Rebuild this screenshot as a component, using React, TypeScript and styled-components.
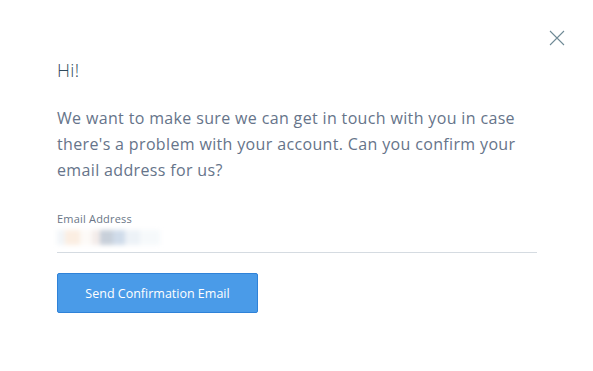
import React from "react";
import styled, { createGlobalStyle } from "styled-components";

const Global = createGlobalStyle`
  html, body { margin: 0; padding: 0; background: #fff; }
  body { font-family: "Open Sans", "Liberation Sans", sans-serif; }
  * { box-sizing: border-box; }
`;

const Dialog = styled.div`
  position: relative;
  width: 593px;
  height: 371px;
  background: #fff;
  padding: 56px 56px 0 57px;
  display: flex;
  flex-direction: column;
`;

const CloseButton = styled.button`
  position: absolute;
  top: 30px;
  right: 28px;
  width: 16px;
  height: 16px;
  padding: 0;
  border: 0;
  background: none;
  cursor: pointer;
  display: flex;
`;

const Title = styled.h1`
  margin: 0;
  font-size: 18px;
  font-weight: 300;
  line-height: 28px;
  color: #2f4a5c;
  letter-spacing: 0.4px;
`;

const Body = styled.p`
  margin: 21px 0 0;
  font-size: 16px;
  line-height: 26px;
  letter-spacing: 0.35px;
  color: #66748a;
  width: 472px;
`;

const Field = styled.div`
  margin-top: 29px;
  display: flex;
  flex-direction: column;
  width: 480px;
  border-bottom: 1px solid #d5dbe1;
`;

const Label = styled.label`
  font-size: 11px;
  line-height: 13px;
  letter-spacing: 0.2px;
  color: #6a7687;
`;

const BlurValue = styled.div`
  display: flex;
  height: 20px;
  margin: 2px 0 5px;
  filter: blur(2px);
`;

const Chunk = styled.span<{ $c: string; $w: number }>`
  display: block;
  width: ${(p) => p.$w}px;
  height: 15px;
  margin-top: 3px;
  background: ${(p) => p.$c};
`;

const Button = styled.button`
  margin-top: 20px;
  width: 201px;
  height: 40px;
  background: #4a9be8;
  border: 1px solid #2f82d8;
  border-radius: 2px;
  color: #fff;
  font-family: "Open Sans", "Liberation Sans", sans-serif;
  font-size: 12.5px;
  cursor: pointer;
`;

const chunks = [
  { c: "#f2f5f8", w: 8 },
  { c: "#fbeee2", w: 15 },
  { c: "#fdfaf7", w: 12 },
  { c: "#f3ecea", w: 8 },
  { c: "#c8d0da", w: 13 },
  { c: "#d0dcea", w: 12 },
  { c: "#edf2f7", w: 15 },
  { c: "#f6f9fb", w: 20 },
];

export default function App() {
  return (
    <>
      <Global />
      <Dialog>
        <CloseButton aria-label="Close">
          <svg width="16" height="16" viewBox="0 0 16 16">
            <path d="M1 1 L15 15 M15 1 L1 15" stroke="#6f8a96" strokeWidth="1.1" fill="none" />
          </svg>
        </CloseButton>
        <Title>Hi!</Title>
        <Body>
          We want to make sure we can get in touch with you in case there's a problem with your
          account. Can you confirm your email address for us?
        </Body>
        <Field>
          <Label>Email Address</Label>
          <BlurValue>
            {chunks.map((ch, i) => (
              <Chunk key={i} $c={ch.c} $w={ch.w} />
            ))}
          </BlurValue>
        </Field>
        <Button>Send Confirmation Email</Button>
      </Dialog>
    </>
  );
}
